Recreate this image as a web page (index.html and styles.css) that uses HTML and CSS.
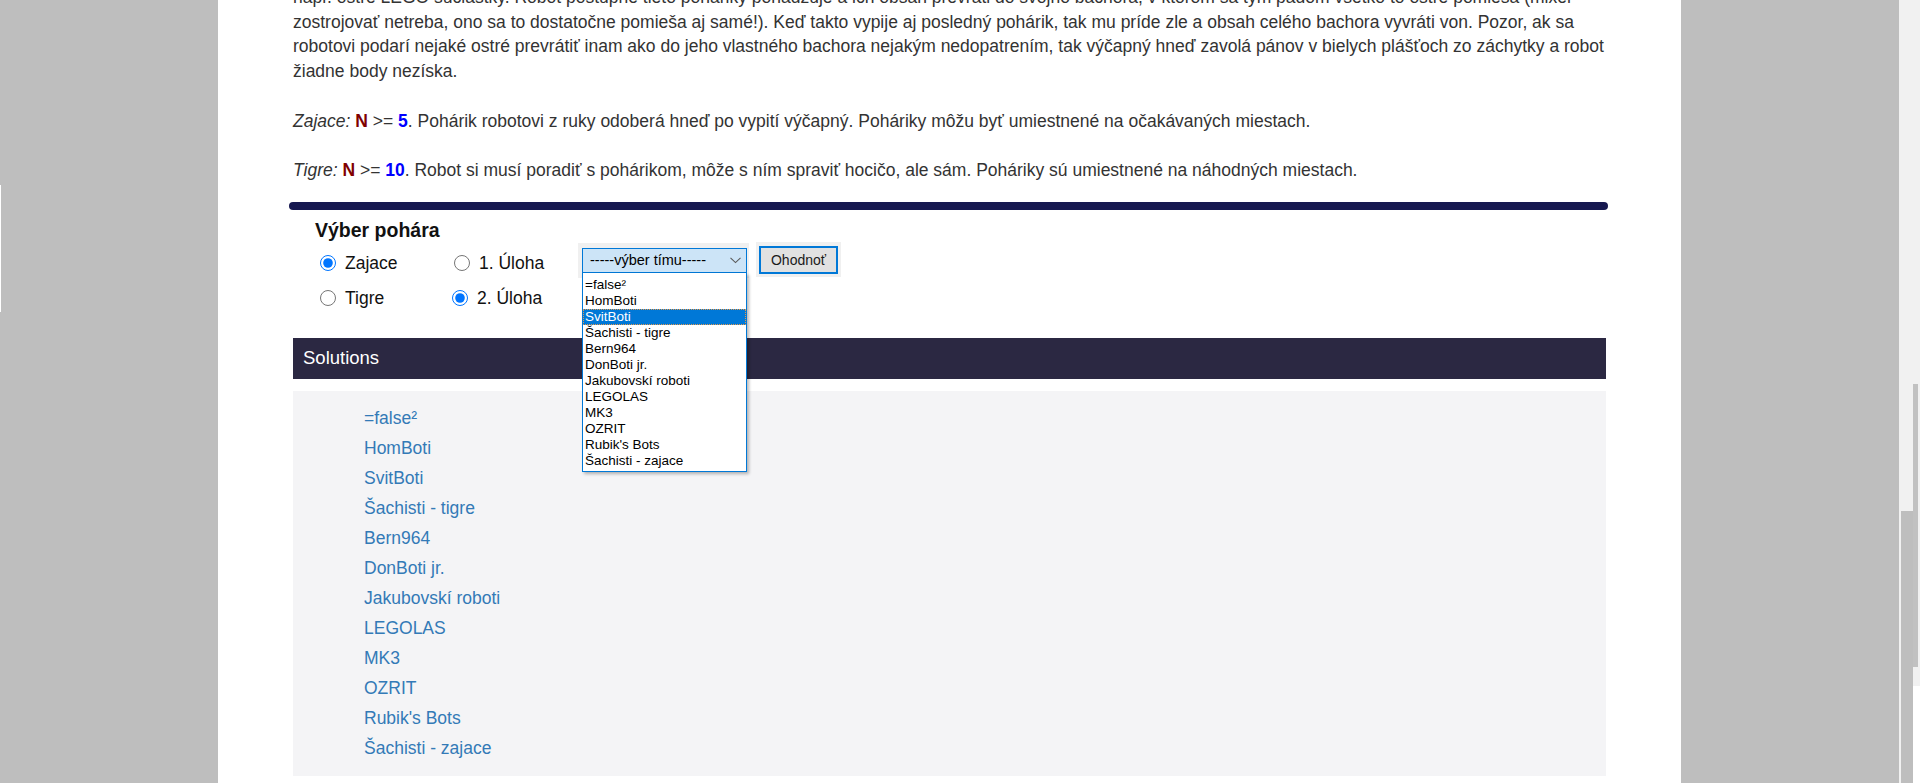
FILE: index.html
```html
<!DOCTYPE html>
<html lang="sk">
<head>
<meta charset="utf-8">
<title>Výber pohára</title>
<link rel="stylesheet" href="styles.css">
</head>
<body>
<div class="page">
  <div class="gutter gutter-left"></div>
  <main class="main">
    <p class="intro">napr. ostré LEGO súčiastky. Robot postupne tieto poháriky pohadzuje a ich obsah prevráti do svojho bachora, v ktorom sa tým pádom všetko to ostré pomieša (mixér<br>zostrojovať netreba, ono sa to dostatočne pomieša aj samé!). Keď takto vypije aj posledný pohárik, tak mu príde zle a obsah celého bachora vyvráti von. Pozor, ak sa<br>robotovi podarí nejaké ostré prevrátiť inam ako do jeho vlastného bachora nejakým nedopatrením, tak výčapný hneď zavolá pánov v bielych plášťoch zo záchytky a robot<br>žiadne body nezíska.</p>
    <p class="rule-text"><em>Zajace:</em> <b class="n">N</b> &gt;= <b class="v">5</b>. Pohárik robotovi z ruky odoberá hneď po vypití výčapný. Poháriky môžu byť umiestnené na očakávaných miestach.</p>
    <p class="rule-text last"><em>Tigre:</em> <b class="n">N</b> &gt;= <b class="v">10</b>. Robot si musí poradiť s pohárikom, môže s ním spraviť hocičo, ale sám. Poháriky sú umiestnené na náhodných miestach.</p>

    <div class="rule"></div>

    <h4 class="chooser-title">Výber pohára</h4>
    <div class="controls">
      <div class="choices">
        <label class="radio"><input type="radio" name="cup" checked><span>Zajace</span></label>
        <label class="radio"><input type="radio" name="task"><span>1. Úloha</span></label>
        <label class="radio"><input type="radio" name="cup"><span>Tigre</span></label>
        <label class="radio shift"><input type="radio" name="task" checked><span>2. Úloha</span></label>
      </div>
      <div class="select-wrap">
        <div class="select">
          <span>-----výber tímu-----</span>
          <svg class="chev" width="11" height="7" viewBox="0 0 11 7"><path d="M0.5 0.8 L5.5 5.6 L10.5 0.8" fill="none" stroke="#5a5a5a" stroke-width="1.1"/></svg>
        </div>
        <ul class="dropdown">
          <li>=false²</li>
          <li>HomBoti</li>
          <li class="active">SvitBoti</li>
          <li>Šachisti - tigre</li>
          <li>Bern964</li>
          <li>DonBoti jr.</li>
          <li>Jakubovskí roboti</li>
          <li>LEGOLAS</li>
          <li>MK3</li>
          <li>OZRIT</li>
          <li>Rubik's Bots</li>
          <li>Šachisti - zajace</li>
        </ul>
      </div>
      <div class="btn-wrap"><button class="btn" type="button">Ohodnoť</button></div>
    </div>

    <div class="sol-header">Solutions</div>
    <ul class="sol-body">
      <li><a href="#">=false²</a></li>
      <li><a href="#">HomBoti</a></li>
      <li><a href="#">SvitBoti</a></li>
      <li><a href="#">Šachisti - tigre</a></li>
      <li><a href="#">Bern964</a></li>
      <li><a href="#">DonBoti jr.</a></li>
      <li><a href="#">Jakubovskí roboti</a></li>
      <li><a href="#">LEGOLAS</a></li>
      <li><a href="#">MK3</a></li>
      <li><a href="#">OZRIT</a></li>
      <li><a href="#">Rubik's Bots</a></li>
      <li><a href="#">Šachisti - zajace</a></li>
    </ul>
  </main>
  <div class="gutter gutter-right"></div>
  <div class="scrollbar">
    <div class="sb-thumb"></div>
    <div class="sb-block"></div>
    <div class="sb-tail"></div>
  </div>
</div>
</body>
</html>
```

FILE: styles.css
```css
html, body {
  margin: 0;
  padding: 0;
}
body {
  background: #bebebe;
  font-family: "Liberation Sans", Arial, sans-serif;
  height: 783px;
  overflow: hidden;
}
.page {
  display: flex;
  height: 783px;
}
.gutter-left {
  width: 218px;
  flex: none;
  position: relative;
}
.gutter-left::before {
  content: "";
  position: absolute;
  left: 0;
  top: 185px;
  width: 1px;
  height: 127px;
  background: #ffffff;
}
.gutter-right {
  flex: 1;
}
.main {
  width: 1463px;
  flex: none;
  box-sizing: border-box;
  background: #ffffff;
  padding: 0 75px 0 75px;
  color: #333333;
  font-size: 17.5px;
  line-height: 24.5px;
}
.intro {
  margin: -14.7px 0 26px;
  white-space: nowrap;
}
.rule-text {
  margin: 0 0 24.5px;
  white-space: nowrap;
}
.rule-text.last {
  margin-bottom: 19.2px;
}
.rule-text .n {
  color: #800000;
}
.rule-text .v {
  color: #0000ff;
}
.rule {
  height: 8px;
  background: #161850;
  border-radius: 4px;
  margin: 0 -2px 0 -4px;
}
.chooser-title {
  font-size: 19.5px;
  font-weight: bold;
  line-height: 24px;
  color: #111111;
  margin: 8px 0 1px 22px;
}
.controls {
  display: flex;
  align-items: flex-start;
  margin-left: 27px;
}
.choices {
  display: grid;
  grid-template-columns: 134px 124px;
  grid-auto-rows: 35px;
  padding-top: 2.5px;
}
.radio {
  display: flex;
  align-items: center;
  gap: 9px;
  color: #111111;
  font-size: 17.5px;
}
.radio.shift {
  margin-left: -2px;
}
.radio input {
  margin: 0;
  width: 16px;
  height: 16px;
}
.select-wrap {
  position: relative;
  background: #f0f0f0;
  padding: 5px 2px 5px 4px;
}
.select {
  width: 165px;
  height: 25px;
  box-sizing: border-box;
  border: 1px solid #0078d7;
  background: #cce4f7;
  display: flex;
  align-items: center;
  justify-content: space-between;
  padding: 0 5px 0 7px;
  font-size: 14.5px;
  color: #000000;
}
.chev {
  display: block;
}
.dropdown {
  position: absolute;
  left: 4px;
  top: 30px;
  width: 165px;
  box-sizing: border-box;
  margin: 0;
  padding: 4px 0 2px;
  list-style: none;
  background: #ffffff;
  border: 1px solid #0078d7;
  border-top: none;
  box-shadow: 2px 2px 3px rgba(0, 0, 0, 0.28);
  z-index: 5;
}
.dropdown li {
  height: 16px;
  line-height: 16px;
  padding-left: 2px;
  font-size: 13.5px;
  color: #000000;
  white-space: nowrap;
}
.dropdown li.active {
  background: #0078d7;
  color: #ffffff;
  outline: 1px dotted #e59a4c;
  outline-offset: -1px;
}
.btn-wrap {
  background: #f0f0f0;
  margin: -1px 0 0 7px;
  padding: 4px 3px 3px;
}
.btn {
  display: block;
  width: 79px;
  height: 28px;
  box-sizing: border-box;
  border: 2px solid #0078d7;
  background: #e1e1e1;
  font-family: "Liberation Sans", Arial, sans-serif;
  font-size: 14px;
  color: #1a1a1a;
  padding: 0;
}
.sol-header {
  margin-top: 22.5px;
  height: 41px;
  background: #2b2842;
  color: #ffffff;
  font-size: 18.5px;
  display: flex;
  align-items: center;
  padding-left: 10px;
}
.sol-body {
  margin: 12px 0 0;
  list-style: none;
  background: #f4f4f6;
  padding: 12px 0 13px 71px;
}
.sol-body li {
  line-height: 30px;
  font-size: 17.5px;
}
.sol-body a {
  color: #337ab7;
  text-decoration: none;
}
.scrollbar {
  width: 21px;
  flex: none;
  background: #f1f1f1;
  position: relative;
}
.sb-thumb {
  position: absolute;
  left: 14px;
  top: 384px;
  width: 5px;
  height: 283px;
  background: #c1c1c1;
}
.sb-block {
  position: absolute;
  left: 2px;
  top: 511px;
  width: 12px;
  height: 272px;
  background: #bebebe;
}
.sb-tail {
  position: absolute;
  left: 14px;
  top: 686px;
  width: 7px;
  height: 97px;
  background: #ffffff;
}
```
